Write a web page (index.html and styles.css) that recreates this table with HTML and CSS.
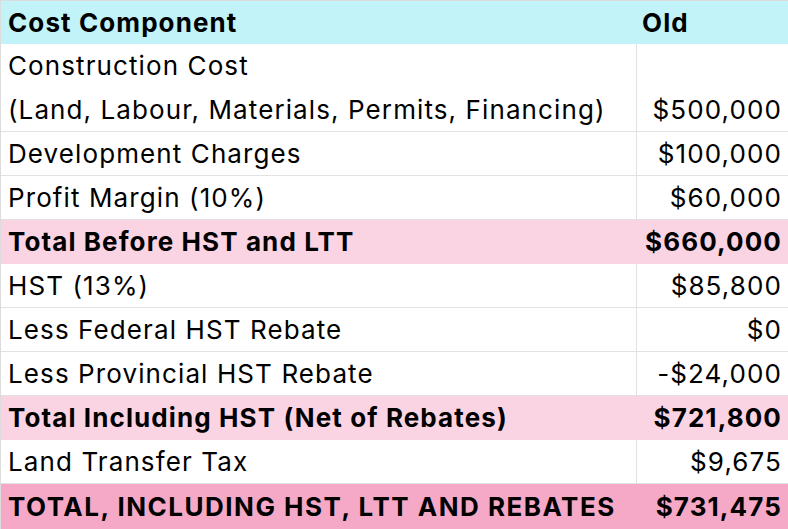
FILE: index.html
```html
<!DOCTYPE html>
<html>
<head>
<meta charset="utf-8">
<link rel="stylesheet" href="styles.css">
</head>
<body>
<div class="sheet">
  <div class="row head"><div class="c1">Cost Component</div><div class="c2 left">Old</div></div>
  <div class="row tall"><div class="c1">Construction Cost<br>(Land, Labour, Materials, Permits, Financing)</div><div class="c2 bottom">$500,000</div></div>
  <div class="row"><div class="c1">Development Charges</div><div class="c2">$100,000</div></div>
  <div class="row"><div class="c1">Profit Margin (10%)</div><div class="c2">$60,000</div></div>
  <div class="row sub"><div class="c1">Total Before HST and LTT</div><div class="c2">$660,000</div></div>
  <div class="row"><div class="c1">HST (13%)</div><div class="c2">$85,800</div></div>
  <div class="row"><div class="c1">Less Federal HST Rebate</div><div class="c2">$0</div></div>
  <div class="row"><div class="c1">Less Provincial HST Rebate</div><div class="c2">-$24,000</div></div>
  <div class="row sub"><div class="c1">Total Including HST (Net of Rebates)</div><div class="c2">$721,800</div></div>
  <div class="row"><div class="c1">Land Transfer Tax</div><div class="c2">$9,675</div></div>
  <div class="row total"><div class="c1 wide">TOTAL, INCLUDING HST, LTT AND REBATES</div><div class="c2">$731,475</div></div>
</div>
</body>
</html>
```
FILE: styles.css
```css
html, body {
  margin: 0;
  padding: 0;
  background: #ffffff;
}
body {
  font-family: Inter, "Noto Sans", sans-serif;
  font-size: 26px;
  letter-spacing: 1.1px;
  color: #000;
}
.sheet {
  width: 787px;
  border-top: 1px solid #dcdcdc;
  border-left: 1px solid #dcdcdc;
}
.row {
  display: grid;
  grid-template-columns: 635px 1fr;
  height: 44px;
  box-sizing: border-box;
  border-bottom: 1px solid #e2e2e2;
}
.row .c1, .row .c2 {
  display: flex;
  align-items: center;
  line-height: 44px;
  white-space: nowrap;
}
.c1 {
  padding-left: 7px;
}
.c1.wide {
  letter-spacing: 1.5px;
}
.c2 {
  justify-content: flex-end;
  padding-right: 6px;
  border-left: 1px solid #e2e2e2;
}
.c2.left {
  justify-content: flex-start;
  padding-left: 5px;
}
.row.tall {
  height: 88px;
}
.row.tall .c1 {
  display: block;
}
.row.tall .c2.bottom {
  align-items: flex-end;
}
.head {
  background: #c1f3f8;
  font-weight: 700;
  height: 43px;
  border-bottom: none;
}
.head .c2, .sub .c2, .total .c2 {
  border-left-color: transparent;
}
.sub {
  background: #fad4e3;
  font-weight: 700;
  border-bottom: none;
}
.total {
  background: #f5a9c7;
  font-weight: 700;
  border-bottom: none;
  height: 45px;
}
```
